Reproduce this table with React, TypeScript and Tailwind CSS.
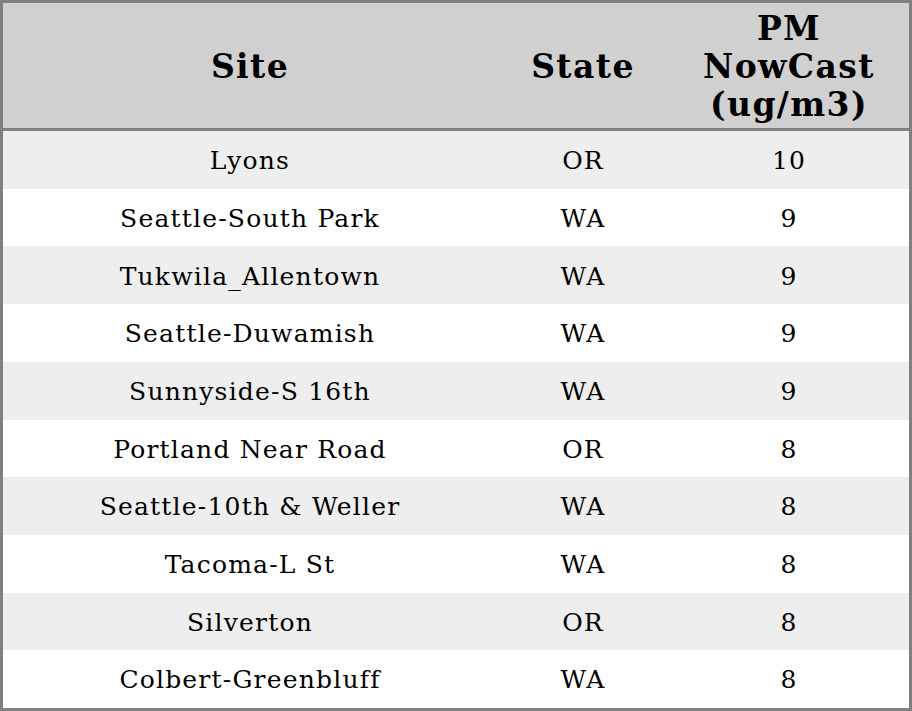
const rows: [string, string, string][] = [
  ["Lyons", "OR", "10"],
  ["Seattle-South Park", "WA", "9"],
  ["Tukwila_Allentown", "WA", "9"],
  ["Seattle-Duwamish", "WA", "9"],
  ["Sunnyside-S 16th", "WA", "9"],
  ["Portland Near Road", "OR", "8"],
  ["Seattle-10th & Weller", "WA", "8"],
  ["Tacoma-L St", "WA", "8"],
  ["Silverton", "OR", "8"],
  ["Colbert-Greenbluff", "WA", "8"],
]

export default function App() {
  return (
    <div className="w-[912px] h-[711px] bg-white font-['DejaVu_Serif',serif] text-black">
      <div className="h-full border-[3px] border-[#808080] flex flex-col">
        <div className="grid grid-cols-[494px_172px_1fr] h-[128px] shrink-0 pt-[2px] bg-[#d0d0d0] border-b-[3px] border-[#808080] text-[33px] font-bold leading-[38px] tracking-[1.4px]">
          <div className="flex items-center justify-center">Site</div>
          <div className="flex items-center justify-center">State</div>
          <div className="flex items-center justify-center text-center">
            PM
            <br />
            NowCast
            <br />
            (ug/m3)
          </div>
        </div>
        <div className="flex-1 flex flex-col text-[25px] tracking-[1.2px]">
          {rows.map(([site, state, pm], i) => (
            <div
              key={site}
              className={`flex-1 grid grid-cols-[494px_172px_1fr] items-center text-center pt-[2px] ${i % 2 === 0 ? "bg-[#eeeeee]" : "bg-white"}`}
            >
              <div>{site}</div>
              <div>{state}</div>
              <div>{pm}</div>
            </div>
          ))}
        </div>
      </div>
    </div>
  )
}
